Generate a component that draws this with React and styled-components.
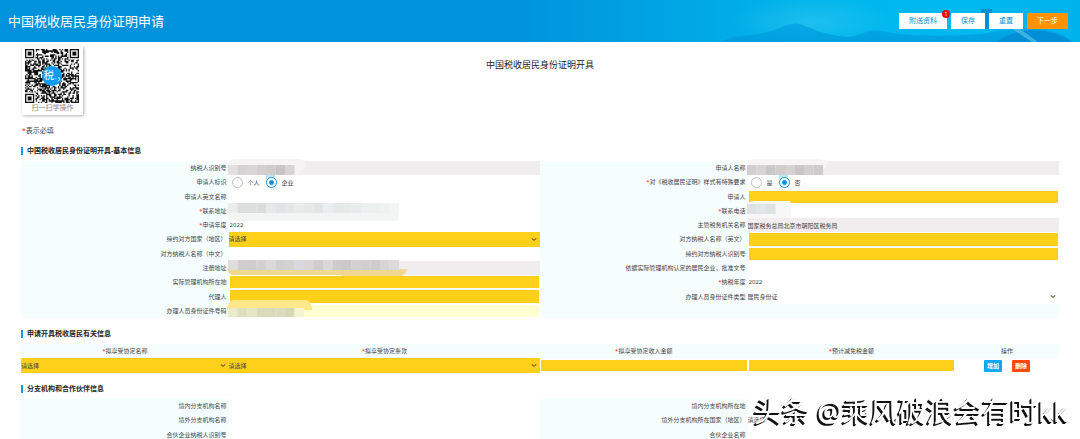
import React from 'react'
import styled, { createGlobalStyle } from 'styled-components'

const GlobalStyle = createGlobalStyle`
    * {
        box-sizing: border-box;
    }

    body {
        margin: 0;
        background: #fff;
        color: #444;
        font-family: "Noto Sans", "Noto Sans CJK SC", sans-serif;
        font-size: 6px;
        overflow: hidden;
    }

    button, input, select {
        font-family: inherit;
        font-size: inherit;
        color: inherit;
    }
`

const Header = styled.header`
    position: relative;
    display: flex;
    align-items: center;
    justify-content: space-between;
    height: 42px;
    padding: 0 12px 0 8px;
    background: linear-gradient(90deg, #0092db 0%, #0093dc 48%, #00a5e4 62%, #00b6ec 76%, #00b9ee 90%, #00b2ea 100%);
`

const Scenery = styled.svg`
    position: absolute;
    right: 0;
    bottom: 0;
    width: 360px;
    height: 42px;
`

const HeaderTitle = styled.h1`
    margin: 0;
    color: #fff;
    font-size: 13px;
    font-weight: 400;
    line-height: 20px;
`

const Actions = styled.div`
    position: relative;
    display: flex;
    gap: 4px;
`

const ActionButton = styled.button`
    position: relative;
    height: 16px;
    padding: 0 10px;
    border: 0;
    background: ${props => props.$primary ? '#ff9200' : '#fff'};
    color: ${props => props.$primary ? '#fff' : '#0094dc'};
    font-size: 7px;
    line-height: 16px;
`

const Badge = styled.span`
    position: absolute;
    top: -3px;
    right: -3px;
    width: 8px;
    height: 8px;
    border-radius: 50%;
    background: #f00;
    color: #fff;
    font-size: 6px;
    line-height: 8px;
    text-align: center;
`

const Main = styled.main`
    padding: 4px 21px 0;
`

const Intro = styled.div`
    display: grid;
    grid-template-columns: 1fr auto 1fr;
    align-items: start;
`

const QrCard = styled.figure`
    width: 61px;
    height: 69px;
    margin: 0 0 0 1px;
    padding: 3px;
    background: #fff;
    box-shadow: 1px 1px 3px rgba(0, 0, 0, 0.3);
    text-align: center;

    svg {
        display: block;
        width: 54px;
        height: 54px;
    }

    figcaption {
        color: #888;
        font-size: 7px;
        line-height: 10px;
    }
`

const PageTitle = styled.h2`
    margin: 12px 0 0;
    color: #222;
    font-size: 9px;
    font-weight: 400;
    line-height: 14px;
`

const Note = styled.p`
    margin: 11px 0 0 1px;
    font-size: 7px;
    line-height: 9px;
`

const Star = styled.span`
    color: #f22;
`

const Section = styled.section`
    margin-top: 12px;
`

const SectionTitle = styled.h3`
    margin: 0 0 6px;
    padding-left: 4px;
    border-left: 2px solid #1495ee;
    color: #222;
    font-size: 7px;
    font-weight: 700;
    line-height: 8px;
`

const FormGrid = styled.div`
    display: grid;
    grid-template-columns: 20% 30% 20% 30%;
    grid-template-rows: repeat(${props => props.$rows}, 1fr);
    min-height: ${props => props.$height};
`

const Label = styled.label`
    display: flex;
    align-items: center;
    justify-content: flex-end;
    padding-right: 2px;
    background: #f6fdfd;
    line-height: 14px;
    white-space: nowrap;
`

const Value = styled.div`
    position: relative;
    display: flex;
    align-items: stretch;
    min-width: 0;
    padding: ${props => props.$inset ? '1px' : '0'};
    background: ${props => props.$blank ? '#f6fdfd' : 'transparent'};
`

const tones = {
    plain: 'transparent',
    readonly: '#f1edee',
    required: '#ffd01a',
    active: '#ffffd2',
}

const TextBox = styled.input`
    flex: 1;
    width: 100%;
    min-width: 0;
    height: ${props => props.$height || 'auto'};
    padding: 0;
    border: 0;
    outline: 0;
    background: ${props => tones[props.$tone]};
`

const SelectWrap = styled.span`
    position: relative;
    display: flex;
    flex: 1;
    height: ${props => props.$height || 'auto'};
    background: ${props => tones[props.$tone]};

    select {
        flex: 1;
        padding: 0;
        border: 0;
        appearance: none;
        background: transparent;
    }

    svg {
        position: absolute;
        top: 5px;
        right: 3px;
        width: 6px;
        height: 5px;
        pointer-events: none;
    }
`

const RadioGroup = styled.div`
    position: relative;
    z-index: 1;
    display: flex;
    align-items: center;
    gap: 6px;
    padding-left: 3px;
`

const RadioLabel = styled.label`
    display: flex;
    align-items: center;
    gap: 5px;
`

const Radio = styled.input`
    width: 11px;
    height: 11px;
    margin: 0;
    border: 1px solid #bbb;
    border-radius: 50%;
    appearance: none;
    background: #fff;

    &:checked {
        border-color: #1495dc;
        background: radial-gradient(circle, #1495dc 2px, #fff 3px);
    }
`

const Smudge = styled.svg`
    position: absolute;
    top: -4px;
    left: -2px;
    width: 180px;
    height: 24px;
    pointer-events: none;
`

const Table = styled.table`
    width: 100%;
    border-collapse: collapse;
    table-layout: fixed;

    th {
        height: 14px;
        padding: 0;
        background: #f6fdfd;
        font-weight: 400;
        line-height: 14px;
    }

    td {
        height: 15px;
        padding: 0;
    }
`

const CellBox = styled.div`
    display: flex;
    padding: 0 1px;
`

const RowActions = styled.div`
    display: flex;
    justify-content: center;
    gap: 10px;
`

const RowButton = styled.button`
    height: 12px;
    padding: 0 3px;
    border: 0;
    border-radius: 1px;
    background: ${props => props.$danger ? '#ff4a0a' : '#0aa9f5'};
    color: #fff;
    font-weight: 700;
    line-height: 12px;
`

const Watermark = styled.div`
    position: fixed;
    right: 12px;
    bottom: 8px;
    color: #fff;
    font-size: 28px;
    line-height: 40px;
    text-shadow: -1px 1px 0 #111, -2px 2px 0 #111;
    white-space: nowrap;
`

const Chevron = () => (
    <svg viewBox="0 0 6 5" aria-hidden="true">
        <path d="M0.8 1.3 L3 3.3 L5.2 1.3" fill="none" stroke="#665c3a" strokeWidth="1.1" />
    </svg>
)

const Select = ({ tone, options, ...rest }) => (
    <SelectWrap $tone={tone} $height={rest.height}>
        <select id={rest.id} aria-label={rest.label}>
            {options.map(option => <option key={option}>{option}</option>)}
        </select>
        <Chevron />
    </SelectWrap>
)

const MODULES = 41

const finder = (x, y) => (
    <g key={`${x}-${y}`}>
        <rect x={x - 1} y={y - 1} width="9" height="9" fill="#fff" />
        <rect x={x} y={y} width="7" height="7" fill="#111" />
        <rect x={x + 1} y={y + 1} width="5" height="5" fill="#fff" />
        <rect x={x + 2} y={y + 2} width="3" height="3" fill="#111" />
    </g>
)

const modulePath = () => {
    let seed = 77
    let d = ''
    for (let y = 0; y < MODULES; y++) {
        for (let x = 0; x < MODULES; x++) {
            seed = (seed * 1103515245 + 12345) % 2147483648
            if (seed / 2147483648 > 0.46) d += `M${x} ${y}h1v1h-1z`
        }
    }
    return d
}

const QrCode = () => (
    <svg viewBox="0 0 41 41">
        <rect width="41" height="41" fill="#fff" />
        <path d={modulePath()} fill="#111" />
        {finder(0, 0)}
        {finder(34, 0)}
        {finder(0, 34)}
        <circle cx="20.5" cy="20.5" r="7.6" fill="#0c9bf0" />
        <text x="14" y="23" fill="#fff" fontSize="8">税</text>
        <path d="M23.4 22.6h.2M25.4 21.6q1.4 .2 .8 1.6l-1 1.2" fill="none" stroke="#fff" strokeWidth="0.6" strokeLinecap="round" />
    </svg>
)

// each smudge is a soft outline plus a run of blocks, nine units wide each
const smudges = {
    id: {
        halo: 'M2 7q0-5 8-5h60q9 0 10 6l-9 10h-62q-9 0-9-5z', haloColor: '#f5f3f3', y: 8, h: 10, tint: 39,
        cells: ['#e3dfe0', '#d8d2d3', '#d9d4d5', '#d3cecf', '#d0cccd', '#c8c5c7', '#d8d4d5'],
    },
    name: {
        halo: 'M2 7q0-5 8-5h62q9 0 10 5l-8 11h-65q-9 0-9-5z', haloColor: '#f6f4f4', y: 8, h: 10, tint: 33,
        cells: ['#d3cfd0', '#d8d4d5', '#cbc8c9', '#d1cdce', '#d5d2d2', '#cac6c8', '#d2cfd0', '#cfcbcd'],
    },
    address: {
        halo: 'M1 11q0-8 6-8h157q7 0 7 7v11h-160q-10 0-10-5z', haloColor: '#f3f4f4', y: 3, h: 10,
        cells: ['#ececec', '#dcdede', '#dcdddd', '#dbdcdc', '#e7e8e8', '#e0e2e3', '#e4e5e6', '#e9eaea', '#e7e8e8', '#e0e6e8', '#ecedee', '#e5e9ea', '#e8eaea', '#e7ebeb', '#ecefef', '#edf0f0', '#f0f2f2', '#f3f5f5'],
    },
    phone: {
        halo: 'M2 5q0-4 8-4h34l1 15q0 5-6 5h-29q-9 0-9-7z', haloColor: '#f7f7f7', y: 4, h: 10,
        cells: ['#dfe2e4', '#e2e6e7', '#dfe2e3'],
    },
    place: {
        halo: 'M0 12h180q-2 8-10 8h-50l-8-2h-103q-8 0-9-6z', haloColor: '#efd990', y: 3, h: 10,
        cells: ['#e1dddc', '#d0cdcf', '#cecccd', '#d4d1d1', '#dcd9da', '#d3d0d3', '#d4d3d4', '#d8d9de', '#dad6d7', '#d0cdcf', '#dbd8d9', '#cecbcd', '#cbc9cb', '#d4d1d2', '#d1cecf', '#ceccce', '#d8d5d6', '#dcd9da'],
    },
    card: {
        halo: 'M0 8q2-9 10-9h65q8 0 10 9v2h-85z', haloColor: '#ffe88a', y: 8, h: 9,
        cells: ['#e9ebc9', '#dddfbf', '#e5e6c6', '#dadbbd', '#d8dabc', '#dadbbf', '#d4d9b5', '#f3f4cf'],
    },
}

const Redacted = ({ kind }) => {
    const { halo, haloColor, y, h, tint, cells } = smudges[kind]
    return (
        <Smudge viewBox="0 0 180 24" aria-hidden="true">
            <path d={halo} fill={haloColor} />
            {cells.map((color, i) => (
                <rect key={i} x={i * 9.5 + 1} y={y} width="9.6" height={h} fill={color} />
            ))}
            {tint && <rect x={tint} y="18" width="9" height="4" fill="#bfe2f5" />}
        </Smudge>
    )
}

const fields = [
    { id: 'taxId', label: '纳税人识别号', tone: 'readonly', redacted: 'id' },
    { id: 'applicantName', label: '申请人名称', tone: 'readonly', redacted: 'name' },
    { id: 'kind', label: '申请人标识', radios: ['个人', '企业'] },
    { id: 'special', label: '对《税收居民证明》样式有特殊要求', star: true, radios: ['是', '否'] },
    { id: 'nameEn', label: '申请人英文名称', tone: 'plain' },
    { id: 'applicant', label: '申请人', tone: 'required' },
    { id: 'address', label: '联系地址', star: true, tone: 'plain', redacted: 'address' },
    { id: 'phone', label: '联系电话', star: true, tone: 'plain', redacted: 'phone' },
    { id: 'applyYear', label: '申请年度', star: true, tone: 'plain', value: '2022' },
    { id: 'authority', label: '主管税务机关名称', tone: 'readonly', value: '国家税务总局北京市朝阳区税务局' },
    { id: 'country', label: '缔约对方国家（地区）', tone: 'required', options: ['请选择'] },
    { id: 'otherNameEn', label: '对方纳税人名称（英文）', tone: 'required' },
    { id: 'otherNameZh', label: '对方纳税人名称（中文）', tone: 'plain' },
    { id: 'otherTaxId', label: '缔约对方纳税人识别号', tone: 'required' },
    { id: 'regAddress', label: '注册地址', tone: 'readonly', redacted: 'place' },
    { id: 'approval', label: '依据实际管理机构认定的居民企业，批准文号', tone: 'plain' },
    { id: 'office', label: '实际管理机构所在地', tone: 'required' },
    { id: 'taxYear', label: '纳税年度', star: true, tone: 'plain', value: '2022' },
    { id: 'agent', label: '代理人', tone: 'required' },
    { id: 'cardType', label: '办理人员身份证件类型', tone: 'plain', options: ['居民身份证'] },
    { id: 'cardNo', label: '办理人员身份证件号码', tone: 'active', redacted: 'card' },
    { id: 'blank', blank: true },
]

const branchFields = [
    { id: 'branchIn', label: '境内分支机构名称', tone: 'plain' },
    { id: 'branchInPlace', label: '境内分支机构所在地', tone: 'plain' },
    { id: 'branchOut', label: '境外分支机构名称', tone: 'plain' },
    { id: 'branchOutPlace', label: '境外分支机构所在国家（地区）', tone: 'plain', options: ['请选择'] },
    { id: 'partnerId', label: '合伙企业纳税人识别号', tone: 'plain' },
    { id: 'partnerName', label: '合伙企业名称', tone: 'plain' },
]

const Field = ({ field }) => {
    const { id, label, star, tone, radios, options, value, redacted, blank } = field
    if (blank) {
        return (
            <>
                <Value $blank />
                <Value $blank />
            </>
        )
    }
    return (
        <>
            <Label as={radios ? 'span' : 'label'} id={`${id}-label`} htmlFor={radios ? undefined : id}>
                {star && <Star>*</Star>}{label}
            </Label>
            <Value $inset={!radios && !options && tone !== 'readonly'}>
                {radios && (
                    <RadioGroup role="radiogroup" aria-labelledby={`${id}-label`}>
                        {radios.map((text, i) => (
                            <RadioLabel key={text}>
                                <Radio type="radio" name={id} defaultChecked={i === 1} />
                                {text}
                            </RadioLabel>
                        ))}
                    </RadioGroup>
                )}
                {options && <Select id={id} tone={tone} options={options} />}
                {!radios && !options && (
                    <TextBox id={id} $tone={tone} defaultValue={value} readOnly={tone === 'readonly'} />
                )}
                {redacted && <Redacted kind={redacted} />}
            </Value>
        </>
    )
}

const App = () => (
    <>
        <GlobalStyle />
        <Header>
            <Scenery viewBox="0 0 360 42" aria-hidden="true">
                <defs>
                    <linearGradient id="hill" x1="0" y1="0" x2="0" y2="1">
                        <stop offset="0" stopColor="#00a4e2" />
                        <stop offset="1" stopColor="#0098dc" />
                    </linearGradient>
                    <radialGradient id="glow">
                        <stop offset="0" stopColor="#3cc8f2" stopOpacity="0.5" />
                        <stop offset="1" stopColor="#3cc8f2" stopOpacity="0" />
                    </radialGradient>
                </defs>
                <ellipse cx="92" cy="22" rx="80" ry="26" fill="url(#glow)" />
                <path d="M12 37Q45 35 62 27Q75 20 88 27Q105 35 128 37Q140 35 148 31Q158 29 172 33Q210 38 260 34L300 28Q340 28 352 42H0z" fill="url(#hill)" opacity="0.75" />
                <path d="M261 9h11v4h-2v16h-7V13h-2z" fill="#0092d4" />
                <path d="M276 42Q292 31 312 30Q338 31 352 42z" fill="#008fd6" />
                <path d="M292 29l20 13h6l-18-13z" fill="#58bfe8" opacity="0.7" />
            </Scenery>
            <HeaderTitle>中国税收居民身份证明申请</HeaderTitle>
            <Actions>
                <ActionButton type="button">附送资料<Badge>1</Badge></ActionButton>
                <ActionButton type="button">保存</ActionButton>
                <ActionButton type="button">重置</ActionButton>
                <ActionButton type="button" $primary>下一步</ActionButton>
            </Actions>
        </Header>
        <Main>
            <Intro>
                <QrCard>
                    <QrCode />
                    <figcaption>扫一扫学操作</figcaption>
                </QrCard>
                <PageTitle>中国税收居民身份证明开具</PageTitle>
            </Intro>
            <Note><Star>*</Star>表示必填</Note>
            <Section>
                <SectionTitle>中国税收居民身份证明开具-基本信息</SectionTitle>
                <FormGrid $rows={11} $height="157px">
                    {fields.map(field => <Field key={field.id} field={field} />)}
                </FormGrid>
            </Section>
            <Section>
                <SectionTitle>申请开具税收居民有关信息</SectionTitle>
                <Table>
                    <colgroup>
                        <col width="20%" />
                        <col width="30%" />
                        <col width="20%" />
                        <col width="20%" />
                        <col width="10%" />
                    </colgroup>
                    <thead>
                        <tr>
                            <th><Star>*</Star>拟享受协定名称</th>
                            <th><Star>*</Star>拟享受协定条款</th>
                            <th><Star>*</Star>拟享受协定收入金额</th>
                            <th><Star>*</Star>预计减免税金额</th>
                            <th>操作</th>
                        </tr>
                    </thead>
                    <tbody>
                        <tr>
                            <td><Select tone="required" height="15px" label="拟享受协定名称" options={['请选择']} /></td>
                            <td><Select tone="required" height="15px" label="拟享受协定条款" options={['请选择']} /></td>
                            <td><CellBox><TextBox $tone="required" $height="11px" aria-label="拟享受协定收入金额" /></CellBox></td>
                            <td><CellBox><TextBox $tone="required" $height="11px" aria-label="预计减免税金额" /></CellBox></td>
                            <td>
                                <RowActions>
                                    <RowButton type="button">增加</RowButton>
                                    <RowButton type="button" $danger>删除</RowButton>
                                </RowActions>
                            </td>
                        </tr>
                    </tbody>
                </Table>
            </Section>
            <Section>
                <SectionTitle>分支机构和合作伙伴信息</SectionTitle>
                <FormGrid $rows={3} $height="43px">
                    {branchFields.map(field => <Field key={field.id} field={field} />)}
                </FormGrid>
            </Section>
        </Main>
        <Watermark>头条 @乘风破浪会有时kk</Watermark>
    </>
)

export default App
